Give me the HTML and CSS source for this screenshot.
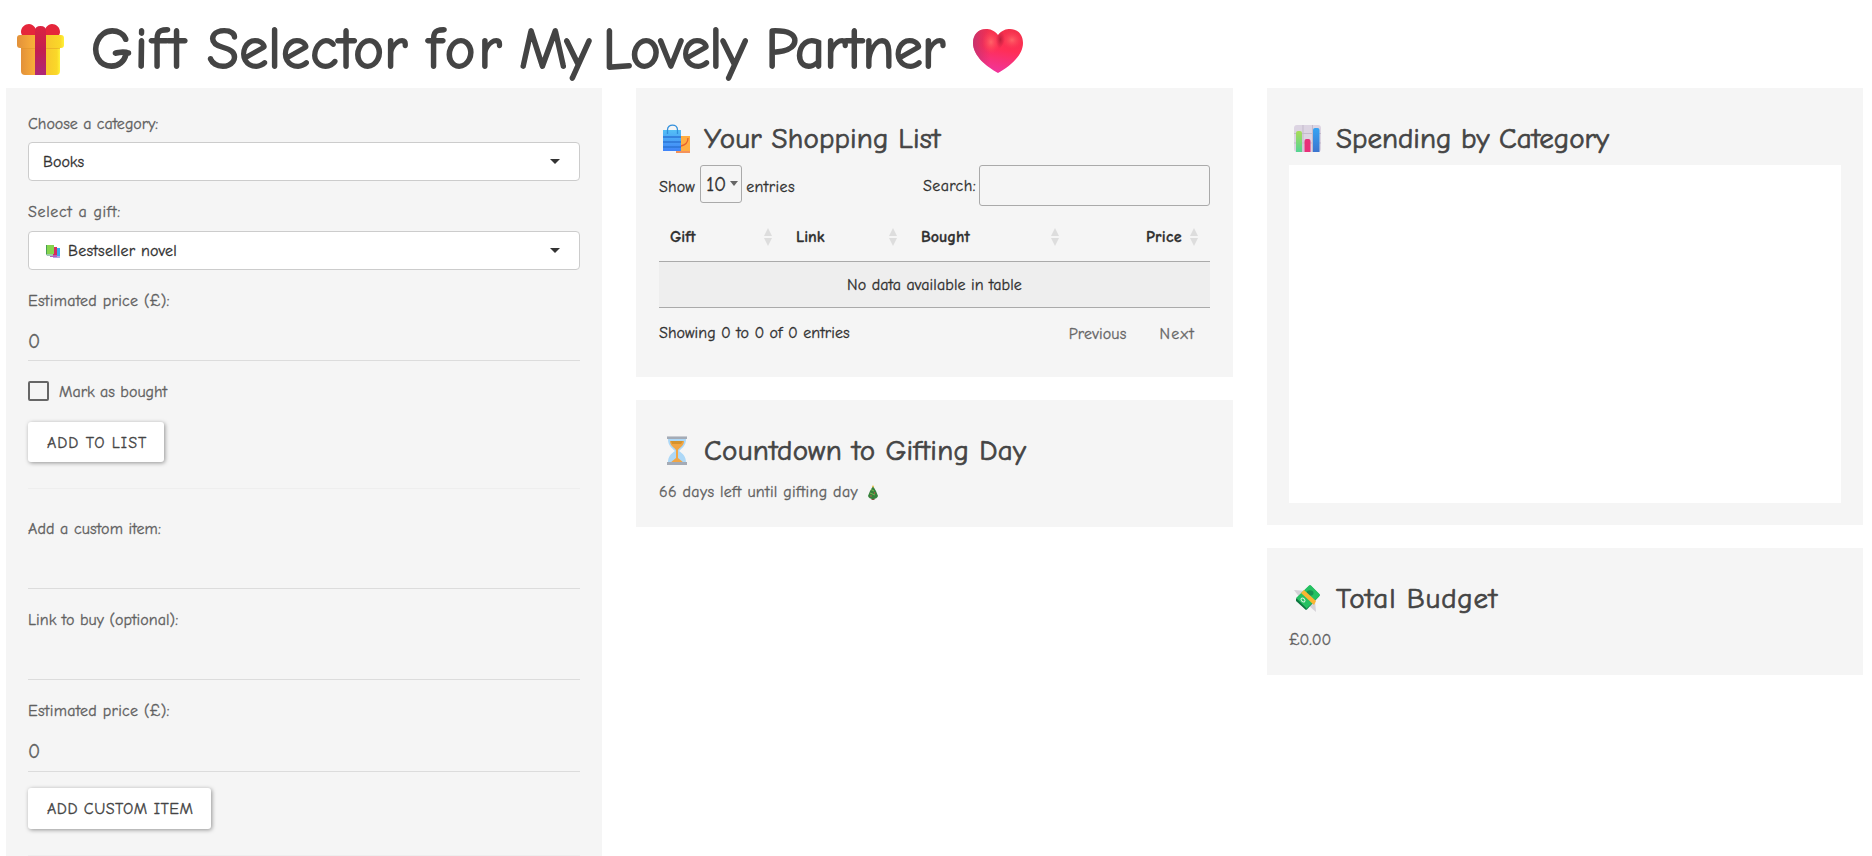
FILE: index.html
```html
<!DOCTYPE html>
<html lang="en">
<head>
<meta charset="utf-8">
<title>Gift Selector for My Lovely Partner</title>
<link rel="stylesheet" href="styles.css">
</head>
<body>
<header class="title-bar">
  <svg class="gift-icon" width="47" height="51" viewBox="0 0 47 51">
    <defs>
      <linearGradient id="box" x1="0" x2="1"><stop offset="0" stop-color="#e2913a"/><stop offset=".3" stop-color="#f6a93a"/><stop offset=".6" stop-color="#f7c52c"/><stop offset=".92" stop-color="#fad829"/><stop offset="1" stop-color="#fff23a"/></linearGradient>
      <linearGradient id="ribbon" x1="0" x2="0" y1="0" y2="1"><stop offset="0" stop-color="#db2340"/><stop offset=".5" stop-color="#c31f50"/><stop offset="1" stop-color="#ae2878"/></linearGradient>
    </defs>
    <path d="M4 8C4 3 8 0 12 0c4 0 8 4 9 12H6C5 11 4 10 4 8zM43 8c0-5-4-8-8-8-4 0-8 4-9 12h15c1-1 2-2 2-4z" fill="#e5263b"/>
    <path d="M4 20h39v27q0 4-4 4H8q-4 0-4-4z" fill="url(#box)"/>
    <path d="M4 22h39v3H4z" fill="#dd9226" opacity=".45"/>
    <rect y="11" width="47" height="13" rx="3" fill="url(#box)"/>
    <path d="M18 51V7q0-5 5.500-5T29 7v44z" fill="url(#ribbon)"/>
  </svg>
  <h1><span class="w-gift">Gift</span> <span class="w-selector">Selector</span> <span class="w-for">for</span> <span class="w-my">My</span> <span class="w-lovely">Lovely</span> <span class="w-partner">Partner</span></h1>
  <svg class="heart-icon" width="50" height="44" viewBox="0 0 50 44">
    <defs>
      <linearGradient id="heart" x1=".6" y1="0" x2=".4" y2="1"><stop offset="0" stop-color="#f3324c"/><stop offset=".45" stop-color="#ff2e56"/><stop offset="1" stop-color="#f0359f"/></linearGradient>
      <radialGradient id="glow"><stop offset="0" stop-color="#ff6468"/><stop offset="1" stop-color="#ff4058" stop-opacity="0"/></radialGradient>
      <linearGradient id="edge" x1="0" x2="1"><stop offset="0" stop-color="#b33478" stop-opacity=".75"/><stop offset=".35" stop-color="#c82c68" stop-opacity="0"/></linearGradient>
      <radialGradient id="cleft"><stop offset="0" stop-color="#bd1f3c"/><stop offset="1" stop-color="#d02548" stop-opacity="0"/></radialGradient>
    </defs>
    <path d="M25 6C21 1 17 0 13 0 5 0 0 6 0 14c0 13 14 24 25 30 11-6 25-17 25-30C50 6 45 0 37 0c-4 0-8 1-12 6z" fill="url(#heart)"/>
    <path d="M25 6C21 1 17 0 13 0 5 0 0 6 0 14c0 13 14 24 25 30 11-6 25-17 25-30C50 6 45 0 37 0c-4 0-8 1-12 6z" fill="url(#edge)"/>
    <ellipse cx="18" cy="13" rx="9" ry="12" fill="url(#glow)"/>
    <ellipse cx="39" cy="11" rx="10" ry="9" fill="url(#glow)"/>
    <path d="M25 6q3-4 6-5l1 10q-4 9-7 9-3-5-2-12z" fill="url(#cleft)"/>
  </svg>
</header>

<main class="columns">
  <section class="panel form-panel">
    <label class="field-label t-category">Choose a category:</label>
    <div class="select"><span class="t-books">Books</span><i class="caret"></i></div>
    <label class="field-label second t-gift">Select a gift:</label>
    <div class="select"><svg class="books-icon" width="15" height="13" viewBox="0 0 15 13"><path d="M7 3h7v9H7z" fill="#39a9f1"/><path d="M7 11h7v2H7z" fill="#b3a3e8"/><path d="M4 2h7v9H4z" fill="#d62b60"/><path d="M4 10h7v2H4z" fill="#b75bb9"/><path d="M0 0h8v9H0z" fill="#86d44d"/><path d="M0 0h1v10H0z" fill="#479f55"/><path d="M0 9h7v2H1z" fill="#9fc8ae"/></svg><span class="t-novel">Bestseller novel</span><i class="caret"></i></div>
    <label class="field-label t-price">Estimated price (£):</label>
    <div class="line-input">0</div>
    <div class="check-row"><span class="checkbox"></span><span class="t-mark">Mark as bought</span></div>
    <button class="btn add"><span class="t-add">ADD TO LIST</span></button>
    <hr>
    <label class="field-label custom t-custom">Add a custom item:</label>
    <div class="line-input"></div>
    <label class="field-label t-link">Link to buy (optional):</label>
    <div class="line-input"></div>
    <label class="field-label t-price">Estimated price (£):</label>
    <div class="line-input last">0</div>
    <button class="btn add-custom"><span class="t-addc">ADD CUSTOM ITEM</span></button>
    <hr>
  </section>

  <div class="column">
    <section class="panel list-panel">
      <h2><svg width="28" height="32" viewBox="0 0 28 32"><defs><linearGradient id="bag" x1="0" x2="0" y1="0" y2="1"><stop offset="0" stop-color="#54c0f5"/><stop offset="1" stop-color="#3f83f8"/></linearGradient></defs><path d="M13 12h14v17H13z" fill="#ffae42"/><path d="M13 27h14v2H13z" fill="#f4925a"/><path d="M25 14c0 5-3 7-7 8" fill="none" stroke="#e8622f" stroke-width="1.300"/><path d="M0 6h18v21H0z" fill="url(#bag)"/><path d="M0 13h18M0 18h18M0 23h18" stroke="#2d76d6" stroke-width="1.500"/><path d="M4.500 10V6c0-6.500 10-6.500 10 0v4" fill="none" stroke="#318fdc" stroke-width="1.300"/></svg><span class="t-shopping">Your Shopping List</span></h2>
      <div class="table-tools">
        <div class="length"><span class="t-show">Show</span><span class="length-select">10<i></i></span><span class="t-entries">entries</span></div>
        <div class="search"><span class="t-search">Search:</span><span class="search-box"></span></div>
      </div>
      <div class="thead">
        <div>Gift<i class="sort"></i></div><div>Link<i class="sort"></i></div><div>Bought<i class="sort"></i></div><div class="num">Price<i class="sort"></i></div>
      </div>
      <div class="empty-row">No data available in table</div>
      <div class="table-foot"><span class="t-showing">Showing 0 to 0 of 0 entries</span><span class="pager"><span class="t-prev">Previous</span><span class="t-next">Next</span></span></div>
    </section>
    <section class="panel small-panel countdown-panel">
      <h2><svg class="hourglass" width="20" height="29" viewBox="0 0 20 29"><path d="M1 3h18c0 7-4 9-7 12 4 3 7 5 7 12H1c0-7 3-9 7-12C5 12 1 10 1 3z" fill="#add8f7"/><path d="M3 5h14c0 5-4 6-6 9v8l6 5H3l6-5v-8C7 11 3 10 3 5z" fill="#f1a645"/><path d="M4 5h12l-2 3H5z" fill="#d5932d"/><path d="M0 0h20v3H0zM0 26h20v3H0z" fill="#a4abb6"/><path d="M0 0h20v1H0z" fill="#c8cbd1"/></svg><span class="t-countdown">Countdown to Gifting Day</span></h2>
      <p><span class="t-days">66 days left until gifting day</span><svg class="tree" width="10" height="15" viewBox="0 0 10 15"><path d="M3.500 11h3v4h-3z" fill="#8d5248"/><path d="M5 1l3 5 2 5q-1 3-5 3T0 11l2-5z" fill="#36823c"/><path d="M3 4.500l3 1.500M2 8l5 2" stroke="#79b552"/><path d="M5 0l.8 1.500L5 3l-.8-1.500z" fill="#f4bc3d"/><circle cx="6.500" cy="8" r=".7" fill="#e34747"/><circle cx="3" cy="11" r=".7" fill="#df5d4f"/></svg></p>
    </section>
  </div>

  <div class="column">
    <section class="panel chart-panel">
      <h2><svg width="27" height="27" viewBox="0 0 27 27"><defs><linearGradient id="gr" x1="0" x2="0" y1="0" y2="1"><stop offset="0" stop-color="#a9dc58"/><stop offset="1" stop-color="#55d494"/></linearGradient><linearGradient id="bl" x1="0" x2="0" y1="0" y2="1"><stop offset="0" stop-color="#35a4f3"/><stop offset="1" stop-color="#3c75cf"/></linearGradient></defs><rect width="27" height="27" rx="3" fill="#dcd4e2"/><path d="M9 0v27M18.500 0v27M0 8.500h27M0 18h27" stroke="#c3bbcb"/><path d="M2 27V8q0-2 2-2h2q2 0 2 2v19z" fill="url(#gr)"/><path d="M10.500 27V16q0-2 2-2h2q2 0 2 2v11z" fill="#e83079"/><path d="M19 27V5q0-2 2-2h2.500q2 0 2 2v22z" fill="url(#bl)"/></svg><span class="t-spending">Spending by Category</span></h2>
      <div class="chart"></div>
    </section>
    <section class="panel small-panel">
      <h2><svg width="27" height="27" viewBox="0 0 27 27"><path d="M0 5l13 1-7 7zM14 20l7-5 1 12z" fill="#d5d2d8"/><path d="M2 15L15 1q1-1 2 0l8 8q1 1 0 2.500L12.500 25z" fill="#138b4c"/><path d="M2 13L15 .5q1-1 2 0l8.500 8.500q1 1 0 2L12.500 23.500z" fill="#25c162"/><path d="M2 13v3l10 9v-2z" fill="#0c7740"/><ellipse cx="16" cy="8" rx="3.500" ry="2.800" fill="#159451"/><path d="M7 8l3-3 12 11-2 4z" fill="#fbb632"/><ellipse cx="9" cy="15" rx="2.300" ry="1.600" transform="rotate(45 9 15)" fill="none" stroke="#d8f2df"/></svg><span class="t-budget">Total Budget</span></h2>
      <p><span class="t-total">£0.00</span></p>
    </section>
  </div>
</main>
</body>
</html>
```
FILE: styles.css
```css
* { box-sizing: border-box; }
body {
  margin: 0;
  height: 856px;
  overflow: hidden;
  background: #fff;
  color: #606060;
  font: 16px/22px "Comic Neue", "Comic Sans MS", Lato, sans-serif;
  font-variant-ligatures: none;
  -webkit-text-stroke: .3px;
}
.title-bar { height: 88px; padding-left: 17px; display: flex; align-items: flex-start; }
.gift-icon { margin-top: 24px; flex: none; }
.heart-icon { margin: 29px 0 0 24px; flex: none; }
h1 {
  margin: 15px 0 0 27px;
  width: 858px;
  font-size: 58px;
  line-height: 70px;
  font-weight: 400;
  color: #444;
  white-space: nowrap;
  -webkit-text-stroke: 1.8px;
}
.w-gift { letter-spacing: 2.300px; }
.w-selector { letter-spacing: .1px; }
.w-for { letter-spacing: 3px; }
.w-my { letter-spacing: -2.500px; margin-left: -5px; }
.w-lovely { letter-spacing: -.9px; margin-left: -5px; }
.w-partner { letter-spacing: -.7px; }
.columns {
  display: grid;
  grid-template-columns: 596px 597px 596px;
  column-gap: 34px;
  align-items: start;
  padding-left: 6px;
}
.column { display: flex; flex-direction: column; gap: 23px; }
.panel { background: #f5f5f5; padding: 22px 22px 0; min-width: 0; }
.form-panel { height: 780px; padding-top: 25px; }
.form-panel hr { border: 0; height: 1px; margin: 26px 0 0; background: #eee; }

.field-label { display: block; height: 22px; margin-top: 20px; white-space: nowrap; }
.field-label:first-child { margin-top: 0; }
.field-label.custom { margin-top: 29px; }
.select {
  display: flex;
  align-items: center;
  height: 39px;
  margin-top: 7px;
  padding: 1px 19px 0 14px;
  border: 1px solid #ccc;
  border-radius: 4px;
  background: #fff;
  color: #303030;
}
.second + .select { margin-top: 8px; }
.caret { margin: -2px 0 0 auto; border: 5px solid transparent; border-top-color: #333; border-bottom: 0; }
.books-icon { margin: 0 7px 0 3px; }
.line-input { height: 49px; padding-top: 19px; border-bottom: 1px solid #dcdcdc; font-size: 20px; }
.line-input.last { height: 50px; }
.check-row { display: flex; align-items: center; height: 20px; margin-top: 20px; }
.check-row .t-mark { padding-top: 2px; }
.checkbox { width: 21px; height: 20px; margin-right: 10px; border: 2px solid #666; border-radius: 2px; }
.btn {
  display: block;
  padding: 1px 0 0 19px;
  border: 0;
  border-radius: 3px;
  background: #fff;
  color: #444;
  font: inherit;
  text-align: left;
  white-space: nowrap;
  -webkit-text-stroke: .3px;
  box-shadow: 1px 1px 4px rgba(0, 0, 0, .4);
}
.btn.add { width: 136px; height: 40px; margin-top: 21px; }
.btn.add-custom { width: 183px; height: 41px; margin-top: 16px; }

h2 {
  display: flex;
  margin: 0;
  height: 55px;
  padding-left: 5px;
  font-size: 29px;
  line-height: 57px;
  font-weight: 400;
  color: #444;
  white-space: nowrap;
  -webkit-text-stroke: .7px;
}
h2 svg { flex: none; margin: 15px 15px 0 0; }
.list-panel h2 { padding-left: 4px; }
.list-panel h2 svg { margin: 14px 13px 0 0; }
h2 .hourglass { margin: 14px 17px 0 3px; }
p { margin: 4px 0 0; display: flex; align-items: center; height: 22px; }
.tree { margin-left: 10px; }

.list-panel { height: 289px; color: #303030; }
.list-panel, .countdown-panel { padding-left: 23px; padding-right: 23px; }
.table-tools { display: flex; justify-content: space-between; height: 41px; }
.length { display: flex; align-items: center; height: 43px; }
.length-select {
  display: flex;
  align-items: center;
  align-self: flex-start;
  justify-content: space-between;
  width: 42px;
  height: 38px;
  margin: 0 4px 0 5px;
  padding: 2px 3px 0 5px;
  border: 1px solid #aaa;
  border-radius: 3px;
  font-size: 20px;
}
.length-select i { border: 4.500px solid transparent; border-top: 5px solid #666; border-bottom: 0; margin-top: -3px; }
.search { display: flex; align-items: center; }
.search-box { width: 231px; height: 41px; margin-left: 3px; border: 1px solid #aaa; border-radius: 3px; }
.thead {
  display: grid;
  grid-template-columns: 126px 125px 162px 138px;
  height: 56px;
  border-bottom: 1px solid #aaa;
  font-weight: 700;
}
.thead div { display: flex; align-items: center; justify-content: space-between; padding: 8px 13px 0 11px; height: 54px; }
.thead .num { justify-content: flex-end; gap: 8px; padding-right: 12px; letter-spacing: .3px; }
.sort { display: grid; gap: 2px; }
.sort::before, .sort::after { content: ""; border: 4px solid transparent; }
.sort::before { border-top: 0; border-bottom: 8px solid #ddd; }
.sort::after { border-bottom: 0; border-top: 8px solid #ddd; }
.empty-row { height: 46px; line-height: 47px; border-bottom: 1px solid #aaa; background: #eee; text-align: center; letter-spacing: .08px; }
.table-foot { display: flex; justify-content: space-between; padding-top: 14px; }
.pager { display: flex; gap: 33px; padding: 1px 15px 0 0; color: #666; }
.small-panel { height: 127px; }
.chart-panel { height: 437px; }
.chart { height: 338px; background: #fff; }

/* tracking per string */
.t-gift { letter-spacing: .65px; }
.t-novel { letter-spacing: .22px; }
.t-price { letter-spacing: .28px; }
.t-custom { letter-spacing: .12px; }
.t-link, .t-showing { letter-spacing: .06px; }
.t-show { letter-spacing: .2px; }
.t-add { letter-spacing: 1px; }
.t-addc { letter-spacing: .52px; }
.t-days { letter-spacing: .3px; }
.t-entries, .t-search { letter-spacing: .4px; }
.t-next { letter-spacing: 1.200px; }
.t-prev { letter-spacing: .15px; }
.t-shopping { letter-spacing: .15px; }
.t-countdown { letter-spacing: .3px; }
.t-budget { letter-spacing: .8px; }
```
